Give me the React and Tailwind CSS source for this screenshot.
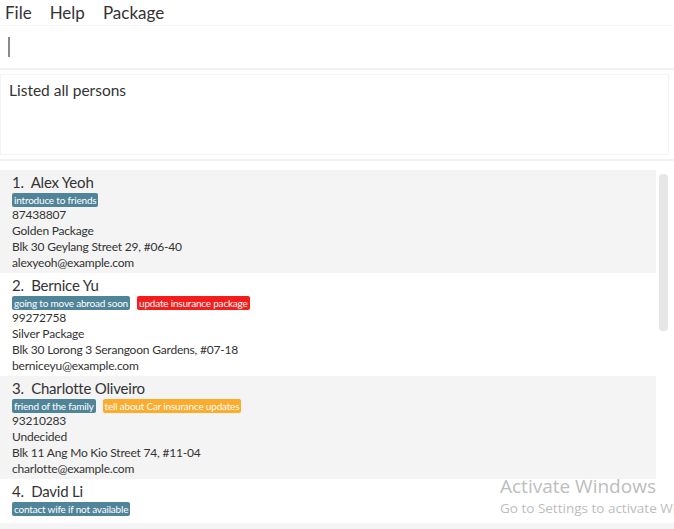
import React from 'react';

const persons = [
  {
    name: 'Alex Yeoh',
    tags: [{ label: 'introduce to friends', color: 'bg-[#4f8499]' }],
    details: ['87438807', 'Golden Package', 'Blk 30 Geylang Street 29, #06-40', 'alexyeoh@example.com'],
  },
  {
    name: 'Bernice Yu',
    tags: [
      { label: 'going to move abroad soon', color: 'bg-[#4f8499]' },
      { label: 'update insurance package', color: 'bg-[#f51c1c]' },
    ],
    details: ['99272758', 'Silver Package', 'Blk 30 Lorong 3 Serangoon Gardens, #07-18', 'berniceyu@example.com'],
  },
  {
    name: 'Charlotte Oliveiro',
    tags: [
      { label: 'friend of the family', color: 'bg-[#4f8499]' },
      { label: 'tell about Car insurance updates', color: 'bg-[#fdab2a]' },
    ],
    details: ['93210283', 'Undecided', 'Blk 11 Ang Mo Kio Street 74, #11-04', 'charlotte@example.com'],
  },
  {
    // only the name and tag are in view
    name: 'David Li',
    tags: [{ label: 'contact wife if not available', color: 'bg-[#4f8499]' }],
    details: [],
  },
];

const PersonCard = ({ index, person }) => (
  <div className={`h-[103px] shrink-0 pl-3 pt-[2px] ${index % 2 === 0 ? 'bg-[#f4f4f4]' : 'bg-white'}`}>
    <div className="h-5 text-[15px] leading-5 tracking-[-0.2px] text-[#333]">
      {index + 1}.&nbsp;&nbsp;{person.name}
    </div>
    <div className="mt-[1px] flex gap-[7px]">
      {person.tags.map((t) => (
        <span
          key={t.label}
          className={`${t.color} h-[14px] rounded-[2px] px-[2px] text-[10px] leading-[14px] tracking-[-0.2px] text-white`}
        >
          {t.label}
        </span>
      ))}
    </div>
    <div className="text-[12px] leading-4 tracking-[-0.2px] text-[#333]">
      {person.details.map((d) => (
        <div key={d}>{d}</div>
      ))}
    </div>
  </div>
);

export default function App() {
  return (
    <div
      className="relative h-[529px] w-[674px] overflow-hidden bg-white"
      style={{ fontFamily: 'Lato, "Open Sans", sans-serif' }}
    >
      {/* Menu */}
      <div className="flex h-[26px] items-center gap-[18px] border-b border-[#f5f5f5] pl-[5px] text-[17px] text-[#333]">
        <span>File</span>
        <span>Help</span>
        <span>Package</span>
      </div>

      {/* Command box */}
      <div className="flex h-[44px] items-center border-b-2 border-[#f1f1f1] pl-[8px]">
        <div className="h-[20px] w-[2px] bg-[#8a8a8a]" />
      </div>

      {/* Result display */}
      <div className="mt-[4px] mr-[5px] h-[81px] border border-[#f4f4f4] pl-[8px] pt-[4px] text-[15.5px] text-[#333]">
        Listed all persons
      </div>

      <div className="mt-[4px] h-[2px] bg-[#f2f2f2]" />

      {/* Person list */}
      <div className="flex h-[362px] pt-[9px]">
        <div className="flex w-[656px] flex-col overflow-hidden">
          {persons.map((p, i) => (
            <PersonCard key={p.name} index={i} person={p} />
          ))}
        </div>
        <div className="ml-[3px] mt-[4px] h-[157px] w-[9px] rounded-[4px] bg-[#e6e6e6]" />
      </div>
      <div className="h-[10px] bg-[#f5f5f5]" />

      {/* Watermark */}
      <div
        className="pointer-events-none absolute left-[500px] top-[474px] whitespace-nowrap text-[#bdbdbd]"
        style={{ fontFamily: '"Open Sans", sans-serif' }}
      >
        <div className="text-[19px] leading-[24px]">Activate Windows</div>
        <div className="text-[13.5px] leading-[20px]">Go to Settings to activate Windows.</div>
      </div>
    </div>
  );
}
